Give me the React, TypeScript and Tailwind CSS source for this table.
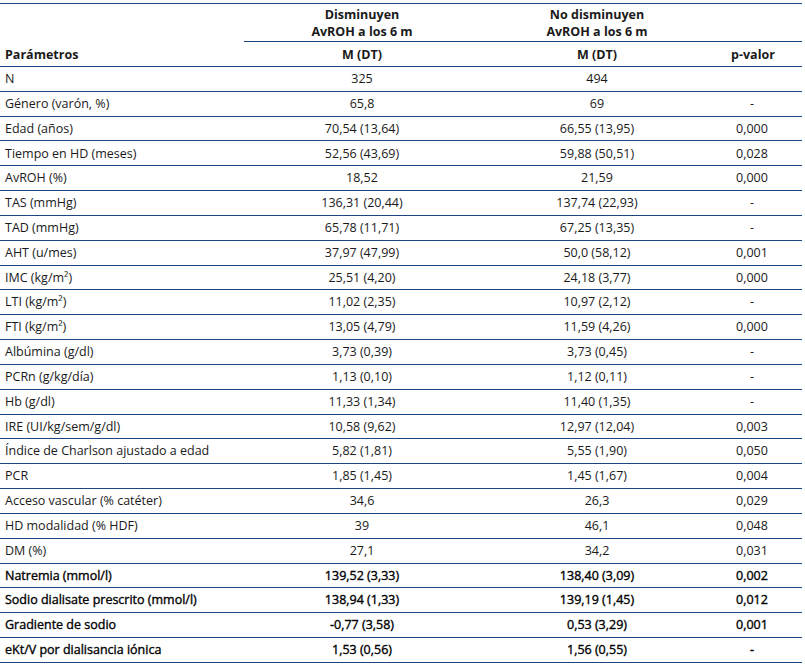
import React from 'react';

type Row = {
  label: string;
  a: string;
  b: string;
  p: string;
  bold?: boolean;
};

const rows: Row[] = [
  { label: 'N', a: '325', b: '494', p: '' },
  { label: 'Género (varón, %)', a: '65,8', b: '69', p: '-' },
  { label: 'Edad (años)', a: '70,54 (13,64)', b: '66,55 (13,95)', p: '0,000' },
  { label: 'Tiempo en HD (meses)', a: '52,56 (43,69)', b: '59,88 (50,51)', p: '0,028' },
  { label: 'AvROH (%)', a: '18,52', b: '21,59', p: '0,000' },
  { label: 'TAS (mmHg)', a: '136,31 (20,44)', b: '137,74 (22,93)', p: '-' },
  { label: 'TAD (mmHg)', a: '65,78 (11,71)', b: '67,25 (13,35)', p: '-' },
  { label: 'AHT (u/mes)', a: '37,97 (47,99)', b: '50,0 (58,12)', p: '0,001' },
  { label: 'IMC (kg/m²)', a: '25,51 (4,20)', b: '24,18 (3,77)', p: '0,000' },
  { label: 'LTI (kg/m²)', a: '11,02 (2,35)', b: '10,97 (2,12)', p: '-' },
  { label: 'FTI (kg/m²)', a: '13,05 (4,79)', b: '11,59 (4,26)', p: '0,000' },
  { label: 'Albúmina (g/dl)', a: '3,73 (0,39)', b: '3,73 (0,45)', p: '-' },
  { label: 'PCRn (g/kg/día)', a: '1,13 (0,10)', b: '1,12 (0,11)', p: '-' },
  { label: 'Hb (g/dl)', a: '11,33 (1,34)', b: '11,40 (1,35)', p: '-' },
  { label: 'IRE (UI/kg/sem/g/dl)', a: '10,58 (9,62)', b: '12,97 (12,04)', p: '0,003' },
  { label: 'Índice de Charlson ajustado a edad', a: '5,82 (1,81)', b: '5,55 (1,90)', p: '0,050' },
  { label: 'PCR', a: '1,85 (1,45)', b: '1,45 (1,67)', p: '0,004' },
  { label: 'Acceso vascular (% catéter)', a: '34,6', b: '26,3', p: '0,029' },
  { label: 'HD modalidad (% HDF)', a: '39', b: '46,1', p: '0,048' },
  { label: 'DM (%)', a: '27,1', b: '34,2', p: '0,031' },
  { label: 'Natremia (mmol/l)', a: '139,52 (3,33)', b: '138,40 (3,09)', p: '0,002', bold: true },
  { label: 'Sodio dialisate prescrito (mmol/l)', a: '138,94 (1,33)', b: '139,19 (1,45)', p: '0,012', bold: true },
  { label: 'Gradiente de sodio', a: '-0,77 (3,58)', b: '0,53 (3,29)', p: '0,001', bold: true },
  { label: 'eKt/V por dialisancia iónica', a: '1,53 (0,56)', b: '1,56 (0,55)', p: '-', bold: true },
];

const cols = 'grid grid-cols-[244px_236px_234px_88px]';

export default function App() {
  return (
    <div className="w-[805px] h-[666px] bg-white pt-[3px] text-[12.5px] text-[#1a1a1a] font-['Open_Sans',sans-serif]">
      <div className="w-[802px] border-t border-[#1d4582]">
        {/* group header */}
        <div className={`${cols} h-[38px]`}>
          <div />
          <div className="col-span-3 grid grid-cols-[236px_234px_88px] border-b border-[#1d4582]">
            <div className="flex flex-col items-center justify-center font-bold leading-[17px] pt-[1px]">
              <span>Disminuyen</span>
              <span>AvROH a los 6 m</span>
            </div>
            <div className="flex flex-col items-center justify-center font-bold leading-[17px] pt-[1px]">
              <span>No disminuyen</span>
              <span>AvROH a los 6 m</span>
            </div>
            <div />
          </div>
        </div>
        <div className={`${cols} h-[25px] items-center font-bold border-b border-[#1d4582]`}>
          <div className="pl-[5px] pt-[2px]">Parámetros</div>
          <div className="text-center pt-[2px]">M (DT)</div>
          <div className="text-center pt-[2px]">M (DT)</div>
          <div className="text-center pt-[2px] pr-[10px]">p-valor</div>
        </div>
        {rows.map((r, i) => (
          <div
            key={i}
            className={`${cols} h-[24.83px] items-center pt-[1px] border-b border-[#1d4582] ${r.bold ? 'text-black [-webkit-text-stroke:0.35px_#000]' : ''}`}
          >
            <div className="pl-[5px] whitespace-nowrap">{r.label}</div>
            <div className="text-center">{r.a}</div>
            <div className="text-center">{r.b}</div>
            <div className="text-center pr-[12px]">{r.p}</div>
          </div>
        ))}
      </div>
    </div>
  );
}
